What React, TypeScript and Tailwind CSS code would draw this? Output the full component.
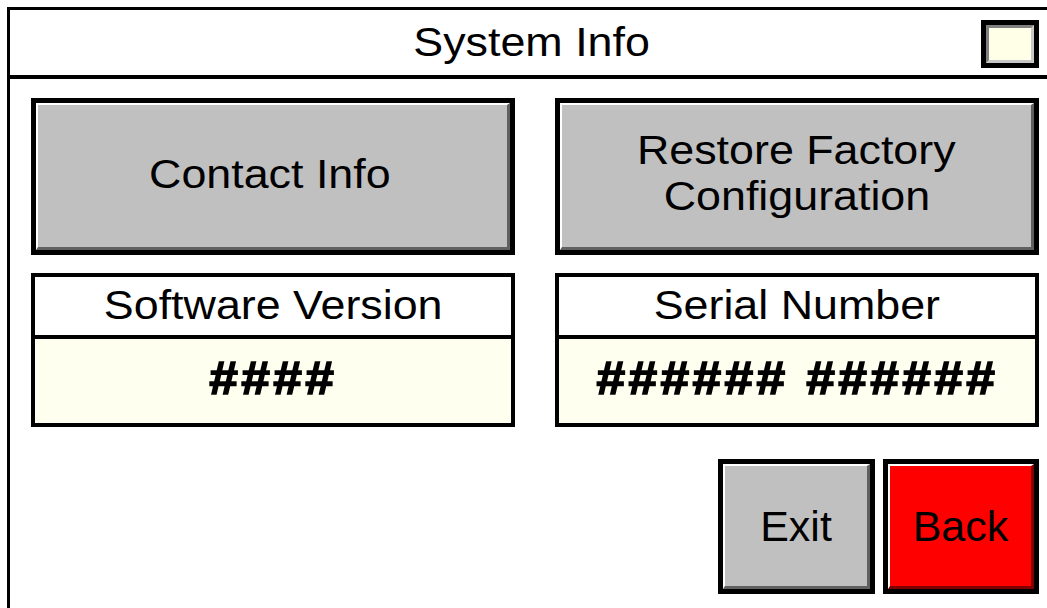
import React from "react";

const font = { fontFamily: '"Liberation Sans", Arial, sans-serif' };

function Wide({ children, className = "" }: { children: React.ReactNode; className?: string }) {
  return <span className={`inline-block scale-x-[1.12] ${className}`}>{children}</span>;
}

function BevelButton({
  children,
  className = "",
  fill = "bg-[#c0c0c0]",
  dark = "border-b-[#606060] border-r-[#606060]",
}: {
  children: React.ReactNode;
  className?: string;
  fill?: string;
  dark?: string;
}) {
  return (
    <div className={`border-[5px] border-black ${className}`}>
      <div
        className={`flex h-full w-full items-center justify-center border-l-2 border-t-2 border-b-[3px] border-r-[3px] border-l-white border-t-white ${dark} ${fill}`}
      >
        {children}
      </div>
    </div>
  );
}

function InfoBox({ label, value }: { label: string; value: string }) {
  return (
    <div className="flex h-[154px] flex-col border-4 border-black">
      <div className="flex h-[62px] items-center justify-center border-b-4 border-black bg-white pb-[2px] text-[40px] leading-none text-black">
        <Wide>{label}</Wide>
      </div>
      <div className="flex flex-1 items-center justify-center bg-[#fffff0] pb-[6px] text-[46px] font-bold leading-none tracking-[3px] text-black [-webkit-text-stroke:1.5px_black]">
        <Wide>{value}</Wide>
      </div>
    </div>
  );
}

export default function App() {
  return (
    <div className="h-[608px] w-[1047px] overflow-hidden bg-white" style={font}>
      <div className="ml-[7px] mt-[7px] h-[620px] w-[1050px] border-[3px] border-black">
        <div className="grid h-[69px] grid-cols-[1fr_auto_1fr] items-center border-b-4 border-black pb-[2px]">
          <div />
          <div className="text-[40px] leading-none text-black">
            <Wide>System Info</Wide>
          </div>
          <div className="flex justify-end pr-[15px] pt-[4px]">
            <div className="h-[48px] w-[58px] border-[5px] border-black">
              <div className="h-full w-full border-[3px] border-l-[#808080] border-t-[#808080] border-b-[#c8c8c8] border-r-[#c8c8c8] bg-[#ffffe8]" />
            </div>
          </div>
        </div>

        <div className="pl-[21px] pr-[15px] pt-[19px]">
          <div className="grid grid-cols-2 gap-x-[40px]">
            <BevelButton className="h-[157px]">
              <span className="pb-[4px] pr-[6px] text-[40px] leading-none text-black">
                <Wide>Contact Info</Wide>
              </span>
            </BevelButton>
            <BevelButton className="h-[157px]">
              <span className="pb-[6px] text-center text-[40px] leading-[46px] text-black">
                <Wide>Restore Factory</Wide>
                <br />
                <Wide>Configuration</Wide>
              </span>
            </BevelButton>
          </div>

          <div className="mt-[18px] grid grid-cols-2 gap-x-[40px]">
            <InfoBox label="Software Version" value="####" />
            <InfoBox label="Serial Number" value="###### ######" />
          </div>

          <div className="mt-[32px] flex justify-end gap-[8px]">
            <BevelButton className="h-[135px] w-[157px]">
              <span className="text-[43px] leading-none text-black">Exit</span>
            </BevelButton>
            <BevelButton
              className="h-[135px] w-[156px]"
              fill="bg-[#ff0000]"
              dark="border-b-[#800000] border-r-[#800000]"
            >
              <span className="text-[43px] leading-none text-black">Back</span>
            </BevelButton>
          </div>
        </div>
      </div>
    </div>
  );
}
